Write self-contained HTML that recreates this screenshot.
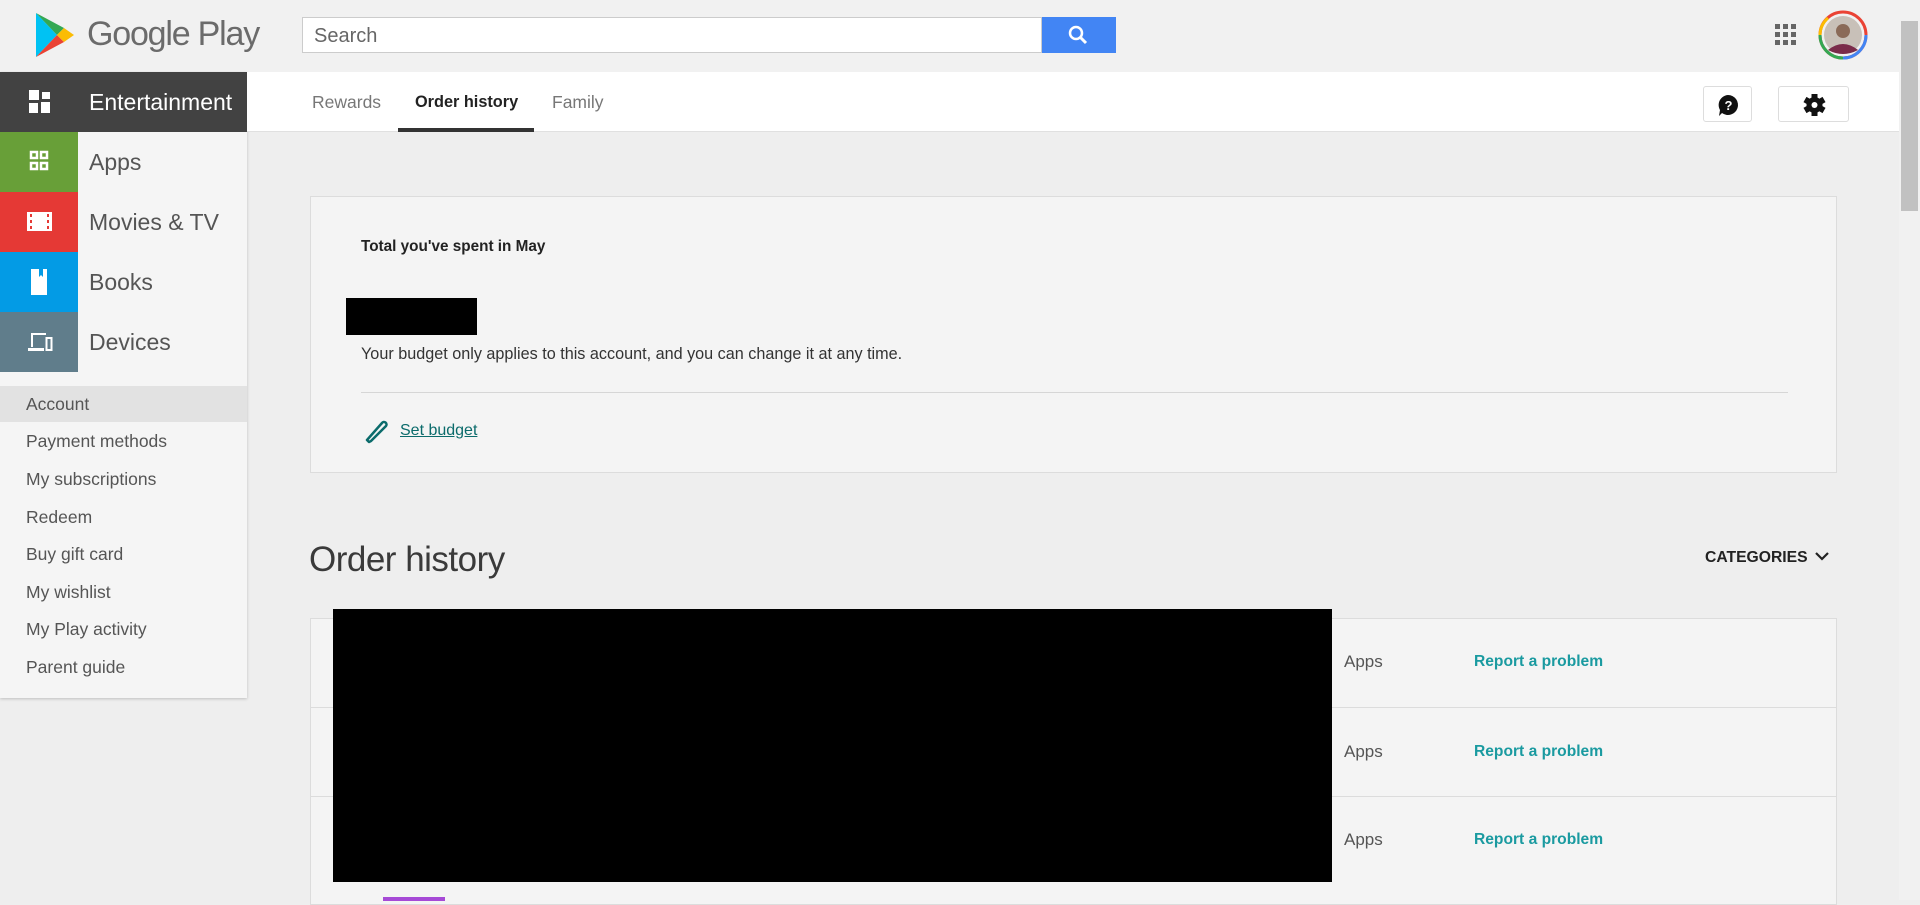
<!DOCTYPE html>
<html><head><meta charset="utf-8">
<style>
*{margin:0;padding:0;box-sizing:border-box}
body{width:1920px;height:900px;overflow:hidden;background:#eeeeee;font-family:"Liberation Sans",Arial,sans-serif;position:relative}
.abs{position:absolute}
#hdr{left:0;top:0;width:1899px;height:72px;background:#f1f1f1}
#search{left:302px;top:17px;width:740px;height:36px;background:#fff;border:1px solid #ccc;font-size:20px;color:#666;padding:7px 11px}
#sbtn{left:1042px;top:17px;width:74px;height:36px;background:#4285f4}
#side{left:0;top:72px;width:247px;height:626px;background:#f5f5f5;box-shadow:0 1px 3px rgba(0,0,0,.2)}
.cat{position:absolute;left:0;width:247px;height:60px;font-size:23px;color:#555;line-height:60px}
.cat .t{position:absolute;left:0;top:0;width:78px;height:60px}
.cat span{position:absolute;left:89px}
.sub{position:absolute;left:26px;font-size:17.5px;color:#555}
#tabs{left:247px;top:72px;width:1652px;height:60px;background:#fff;border-bottom:1px solid #e0e0e0}
.tab{position:absolute;top:20px;font-size:17.5px;color:#777}
.btn{position:absolute;background:#fff;border:1px solid #ddd;border-radius:3px}
#card{left:310px;top:196px;width:1527px;height:277px;background:#f4f4f4;border:1px solid #dcdcdc}
.row{position:absolute;left:310px;width:1527px;height:89px;background:#f4f4f4;border:1px solid #dcdcdc;border-top:none}
.apps{position:absolute;left:1344px;font-size:17px;color:#555}
.rep{position:absolute;left:1474px;font-size:15.6px;color:#1a9aa0;font-weight:bold}
</style></head><body>
<div id="hdr" class="abs"></div>
<svg class="abs" style="left:34px;top:12px" width="42" height="46" viewBox="0 0 42 46">
<path d="M2 1 L23 23 L2 45 Z" fill="#00c2f3"/>
<path d="M2 1 L30 16 L23 23 Z" fill="#34a853"/>
<path d="M2 45 L30 30 L23 23 Z" fill="#ea4335"/>
<path d="M30 16 L40 23 L30 30 L23 23 Z" fill="#fbbc04"/>
</svg>
<div class="abs" style="left:87px;top:15px;font-size:34px;color:#6b6b6b;letter-spacing:-1.2px">Google Play</div>
<div id="search" class="abs">Search</div>
<div id="sbtn" class="abs"><svg width="74" height="36"><circle cx="34" cy="16" r="6" fill="none" stroke="#fff" stroke-width="2.5"/><path d="M38 20 L44 26" stroke="#fff" stroke-width="3"/></svg></div>
<svg class="abs" style="left:1775px;top:24px" width="22" height="22"><g fill="#666"><rect x="0" y="0" width="5" height="5"/><rect x="8" y="0" width="5" height="5"/><rect x="16" y="0" width="5" height="5"/><rect x="0" y="8" width="5" height="5"/><rect x="8" y="8" width="5" height="5"/><rect x="16" y="8" width="5" height="5"/><rect x="0" y="16" width="5" height="5"/><rect x="8" y="16" width="5" height="5"/><rect x="16" y="16" width="5" height="5"/></g></svg>
<svg class="abs" style="left:1818px;top:10px" width="50" height="50"><circle cx="25" cy="25" r="23" fill="none" stroke="#ea4335" stroke-width="3"/><path d="M25 48 A23 23 0 0 1 2 25" fill="none" stroke="#34a853" stroke-width="3"/><path d="M48 25 A23 23 0 0 1 25 48" fill="none" stroke="#4285f4" stroke-width="3"/><path d="M2 25 A23 23 0 0 1 10 8" fill="none" stroke="#fbbc04" stroke-width="3"/><circle cx="25" cy="25" r="19" fill="#c8c0b8"/><circle cx="25" cy="21" r="7" fill="#8a6a58"/><path d="M10 40 Q25 28 40 40 Q25 48 10 40Z" fill="#7a2b4a"/></svg>
<div class="abs" style="left:1899px;top:0;width:21px;height:900px;background:#f1f1f1"></div>
<div class="abs" style="left:1901px;top:21px;width:17px;height:190px;background:#c1c1c1"></div>

<div id="side" class="abs">
<div class="cat" style="top:0;background:#424242;color:#fff"><svg class="t" viewBox="0 0 78 60"><g fill="#fff"><rect x="29" y="18" width="10" height="10"/><rect x="42" y="20" width="8" height="7"/><rect x="29" y="31" width="9" height="10"/><rect x="41" y="30" width="9" height="11"/></g></svg><span>Entertainment</span></div>
<div class="cat" style="top:60px"><svg class="t" viewBox="0 0 78 60" style="background:#689f38"><g fill="none" stroke="#fff" stroke-width="2.5"><rect x="31" y="20" width="6" height="6"/><rect x="41" y="20" width="6" height="6"/><rect x="31" y="31" width="6" height="6"/><rect x="41" y="31" width="6" height="6"/></g></svg><span>Apps</span></div>
<div class="cat" style="top:120px"><svg class="t" viewBox="0 0 78 60" style="background:#e53935"><rect x="27" y="20" width="25" height="19" fill="#fff"/><g fill="#e53935"><rect x="30" y="22" width="2" height="3"/><rect x="30" y="28" width="2" height="3"/><rect x="30" y="34" width="2" height="3"/><rect x="47" y="22" width="2" height="3"/><rect x="47" y="28" width="2" height="3"/><rect x="47" y="34" width="2" height="3"/></g></svg><span>Movies &amp; TV</span></div>
<div class="cat" style="top:180px"><svg class="t" viewBox="0 0 78 60" style="background:#039be5"><path d="M31 17 H47 V43 H31Z" fill="#fff"/><path d="M39 17 V25 L41 23 L43 25 V17Z" fill="#039be5"/></svg><span>Books</span></div>
<div class="cat" style="top:240px"><svg class="t" viewBox="0 0 78 60" style="background:#607d8b"><path d="M31 21 H46 V23 H33 V35 H31Z M28 36 H44 V39 H28Z" fill="#fff"/><rect x="46.5" y="26" width="5" height="12" fill="none" stroke="#fff" stroke-width="2"/></svg><span>Devices</span></div>
<div class="abs" style="left:0;top:314px;width:247px;height:36px;background:#e2e2e2"></div>
<div class="sub" style="top:322px">Account</div>
<div class="sub" style="top:359px">Payment methods</div>
<div class="sub" style="top:397px">My subscriptions</div>
<div class="sub" style="top:435px">Redeem</div>
<div class="sub" style="top:472px">Buy gift card</div>
<div class="sub" style="top:510px">My wishlist</div>
<div class="sub" style="top:547px">My Play activity</div>
<div class="sub" style="top:585px">Parent guide</div>
</div>

<div id="tabs" class="abs">
<div class="tab" style="left:65px">Rewards</div>
<div class="tab" style="left:168px;color:#222;font-weight:bold;font-size:16.3px;top:21px">Order history</div>
<div class="tab" style="left:305px">Family</div>
<div class="abs" style="left:151px;top:56px;width:136px;height:4px;background:#333"></div>
</div>
<div class="btn" style="left:1703px;top:86px;width:49px;height:36px"><svg width="49" height="36"><path d="M24 8 A10 10 0 1 1 18 26 L15 29 L16 23 A10 10 0 0 1 24 8Z" fill="#111"/><text x="24.5" y="23" font-size="13" font-weight="bold" fill="#fff" text-anchor="middle" font-family="Liberation Sans">?</text></svg></div>
<div class="btn" style="left:1778px;top:86px;width:71px;height:36px"><svg width="71" height="36"><g transform="translate(35.5 18)"><g fill="#111"><rect x="-3" y="-11" width="6" height="22"/><rect x="-3" y="-11" width="6" height="22" transform="rotate(60)"/><rect x="-3" y="-11" width="6" height="22" transform="rotate(120)"/><circle r="8"/></g><circle r="3" fill="#fff"/></g></svg></div>

<div id="card" class="abs">
<div class="abs" style="left:50px;top:41px;font-size:15.3px;color:#222;font-weight:bold">Total you've spent in May</div>
<div class="abs" style="left:35px;top:101px;width:131px;height:37px;background:#000"></div>
<div class="abs" style="left:50px;top:148px;font-size:16.2px;color:#333">Your budget only applies to this account, and you can change it at any time.</div>
<div class="abs" style="left:50px;top:195px;width:1427px;height:1px;background:#d6d6d6"></div>
<svg class="abs" style="left:53px;top:222px" width="26" height="26"><path d="M5 23 L3 21 L18 4 A2.5 2.5 0 0 1 22 7 L7 22 Z" fill="none" stroke="#0b6b6b" stroke-width="2.5" stroke-linejoin="round"/></svg>
<div class="abs" style="left:89px;top:225px;font-size:16px;color:#0b6b6b;text-decoration:underline">Set budget</div>
</div>

<div class="abs" style="left:309px;top:540px;font-size:35px;color:#3a3a3a;letter-spacing:-0.5px">Order history</div>
<div class="abs" style="left:1705px;top:549px;font-size:15.7px;color:#222;font-weight:bold">CATEGORIES</div>
<svg class="abs" style="left:1814px;top:550px" width="16" height="14"><path d="M2 3 L8 9 L14 3" fill="none" stroke="#222" stroke-width="2.2"/></svg>

<div class="row" style="top:618px;border-top:1px solid #dcdcdc;height:90px"></div>
<div class="row" style="top:708px"></div>
<div class="row" style="top:797px"></div>
<div class="row" style="top:885px;height:20px"></div>
<div class="abs" style="left:383px;top:897px;width:62px;height:4px;background:#a64ad6"></div>
<div class="abs" style="left:333px;top:609px;width:999px;height:273px;background:#000"></div>
<div class="apps" style="top:652px">Apps</div><div class="rep" style="top:653px">Report a problem</div>
<div class="apps" style="top:742px">Apps</div><div class="rep" style="top:743px">Report a problem</div>
<div class="apps" style="top:830px">Apps</div><div class="rep" style="top:831px">Report a problem</div>
</body></html>
